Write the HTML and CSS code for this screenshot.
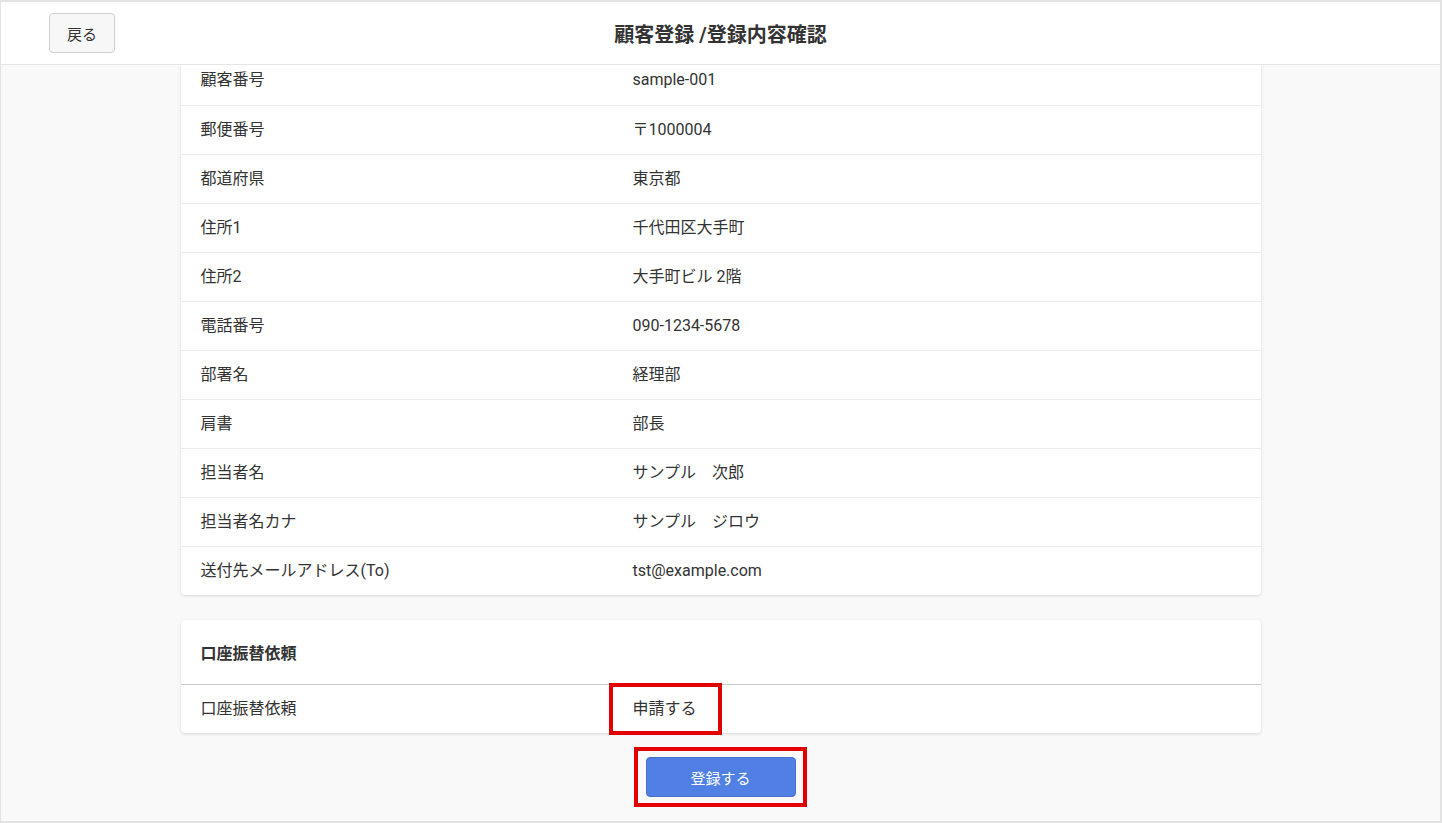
FILE: index.html
```html
<!DOCTYPE html>
<html>
<head>
  <title>顧客登録 /登録内容確認</title>
  <link rel="stylesheet" href="styles.css">
</head>
<body>
  <div class="frame">
    <header class="topbar">
      <button class="back-btn">戻る</button>
      <h1 class="title">顧客登録 /登録内容確認</h1>
    </header>

    <main class="content">
      <section class="card">
        <div class="row row-cut"><div class="label">顧客番号</div><div class="value">sample-001</div></div>
        <div class="row"><div class="label">郵便番号</div><div class="value">〒1000004</div></div>
        <div class="row"><div class="label">都道府県</div><div class="value">東京都</div></div>
        <div class="row"><div class="label">住所1</div><div class="value">千代田区大手町</div></div>
        <div class="row"><div class="label">住所2</div><div class="value">大手町ビル 2階</div></div>
        <div class="row"><div class="label">電話番号</div><div class="value">090-1234-5678</div></div>
        <div class="row"><div class="label">部署名</div><div class="value">経理部</div></div>
        <div class="row"><div class="label">肩書</div><div class="value">部長</div></div>
        <div class="row"><div class="label">担当者名</div><div class="value">サンプル　次郎</div></div>
        <div class="row"><div class="label">担当者名カナ</div><div class="value">サンプル　ジロウ</div></div>
        <div class="row row-last"><div class="label">送付先メールアドレス(To)</div><div class="value">tst@example.com</div></div>
      </section>

      <section class="card card-second">
        <div class="card-head">口座振替依頼</div>
        <div class="row row-last"><div class="label">口座振替依頼</div><div class="value"><span class="marked">申請する</span></div></div>
      </section>

      <div class="actions">
        <div class="mark-box">
          <button class="submit-btn">登録する</button>
        </div>
      </div>
    </main>
  </div>
</body>
</html>
```

FILE: styles.css
```css
html, body {
  margin: 0;
  padding: 0;
}

body {
  font-family: Roboto, "Noto Sans CJK JP", sans-serif;
  color: #333;
  background-color: #fff;
}

.frame {
  height: 823px;
  box-sizing: border-box;
  border: 2px solid #e3e3e3;
  border-left-width: 1px;
  background-color: #f9f9f9;
  display: flex;
  flex-direction: column;
  overflow: hidden;
}

.topbar {
  height: 62px;
  background-color: #fff;
  border-bottom: 1px solid #e6e6e6;
  display: flex;
  align-items: center;
  justify-content: center;
  position: relative;
}

.back-btn {
  position: absolute;
  left: 48px;
  top: 11px;
  width: 66px;
  height: 40px;
  font-family: Roboto, "Noto Sans CJK JP", sans-serif;
  font-size: 15px;
  color: #333;
  background-color: #f7f7f7;
  border: 1px solid #cfcfcf;
  border-radius: 4px;
}

.title {
  margin: 0;
  font-size: 20px;
  font-weight: bold;
  color: #333;
}

.content {
  flex: 1;
  display: flex;
  flex-direction: column;
  align-items: center;
}

.card {
  width: 1080px;
  background-color: #fff;
  border-radius: 0 0 4px 4px;
  box-shadow: 0 1px 3px rgba(0, 0, 0, 0.14);
}

.card-second {
  margin-top: 25px;
  border-radius: 4px;
}

.card-head {
  height: 64px;
  padding-left: 20px;
  display: flex;
  align-items: center;
  font-size: 16px;
  font-weight: bold;
  border-bottom: 1px solid #c8c8c8;
}

.row {
  height: 48px;
  display: flex;
  align-items: center;
  border-bottom: 1px solid #ebebeb;
  font-size: 16px;
  line-height: 24px;
}

.row-cut {
  height: 41px;
  align-items: flex-start;
  padding-top: 3px;
  box-sizing: border-box;
}

.row-last {
  border-bottom: none;
}

.label {
  width: 432px;
  padding-left: 20px;
}

.value {
  flex: 1;
}

.marked {
  position: relative;
}

.marked::after {
  content: "";
  position: absolute;
  left: -24px;
  right: -25px;
  top: -16px;
  bottom: -17px;
  border: 4px solid #e00000;
}

.actions {
  padding-top: 14px;
  display: flex;
  justify-content: center;
}

.mark-box {
  border: 4px solid #e00000;
  padding: 6px 7px 6px 8px;
  margin-left: -1px;
}

.submit-btn {
  display: block;
  width: 150px;
  height: 40px;
  font-family: Roboto, "Noto Sans CJK JP", sans-serif;
  font-size: 15px;
  color: #fff;
  background-color: #5080e4;
  border: 1px solid #4870d2;
  border-radius: 4px;
}
```
